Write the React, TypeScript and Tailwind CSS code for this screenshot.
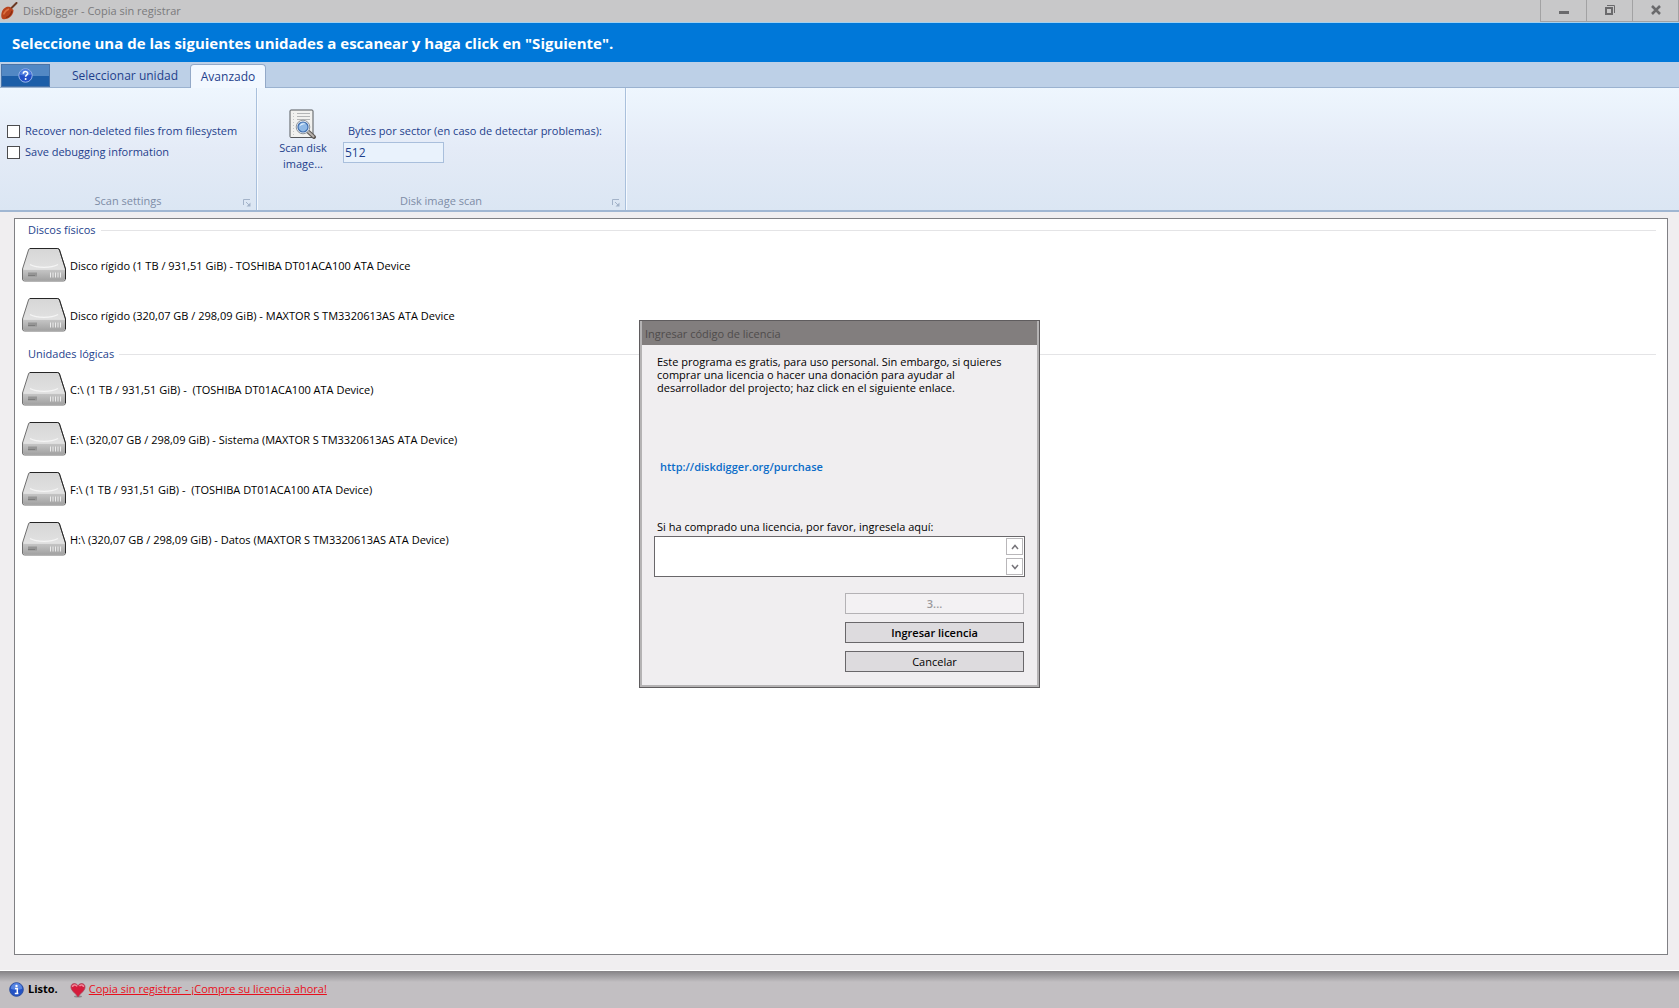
import { useState } from 'react'

const PHYSICAL = [
  'Disco rígido (1 TB / 931,51 GiB) - TOSHIBA DT01ACA100 ATA Device',
  'Disco rígido (320,07 GB / 298,09 GiB) - MAXTOR S TM3320613AS ATA Device',
]

const LOGICAL = [
  'C:\\ (1 TB / 931,51 GiB) -  (TOSHIBA DT01ACA100 ATA Device)',
  'E:\\ (320,07 GB / 298,09 GiB) - Sistema (MAXTOR S TM3320613AS ATA Device)',
  'F:\\ (1 TB / 931,51 GiB) -  (TOSHIBA DT01ACA100 ATA Device)',
  'H:\\ (320,07 GB / 298,09 GiB) - Datos (MAXTOR S TM3320613AS ATA Device)',
]

function ShovelIcon() {
  return (
    <svg width="18" height="18" viewBox="0 0 18 18" aria-hidden="true">
      <path d="M16.500 1 9.500 8" stroke="#6b3a25" strokeWidth="2" strokeLinecap="round" />
      <path d="M3.500 7C6 4.500 8 4.500 10 5l3.500 3c0 3-1.500 5.500-4 7.500-2 1.500-4.500 2-7 1.500C.500 15.500 1 10 3.500 7Z" fill="#b8431d" />
      <path d="M3.500 12.500c1-2.500 3-4.500 5.500-5.500" stroke="#dc7042" strokeWidth="1.500" fill="none" />
      <path d="M6 15.500c3-.5 5-3 6-6.500" stroke="#8a2c12" strokeWidth="1.200" fill="none" />
    </svg>
  )
}

function HelpIcon() {
  return (
    <svg width="15" height="15" viewBox="0 0 15 15" aria-hidden="true">
      <circle cx="7.500" cy="7.500" r="6.700" fill="#2450c8" stroke="#9ab8ea" />
      <path d="M2 6.500a5.500 5.500 0 0 1 11 0c-3 1.500-8 1.500-11 0Z" fill="#4f7de0" />
      <path d="M5.300 5.700c0-3 4.500-2.800 4.400-.2 0 1.500-2 1.500-2.100 3.300" stroke="#fff" strokeWidth="1.600" fill="none" />
      <circle cx="7.600" cy="11" r="1" fill="#fff" />
    </svg>
  )
}

function InfoIcon() {
  return (
    <svg width="15" height="15" viewBox="0 0 15 15" aria-hidden="true">
      <circle cx="7.500" cy="7.500" r="6.800" fill="#2352c4" stroke="#2c4fa0" />
      <path d="M1.800 6.800a5.700 5.700 0 0 1 11.400 0c-3 1.500-8.400 1.500-11.400 0Z" fill="#5785e2" />
      <circle cx="7.500" cy="3.900" r="1.200" fill="#fff" />
      <path d="M6 6.500h2.300v5M5.800 11.500h3.600" stroke="#fff" strokeWidth="1.500" fill="none" />
    </svg>
  )
}

function HeartIcon() {
  return (
    <svg width="16" height="16" viewBox="0 0 16 16" aria-hidden="true">
      <ellipse cx="8" cy="14.500" rx="4" ry="1" fill="#8d8a8c" />
      <path d="M8 15C6 11.500 1 9 1 5 1 .800 6.500.500 8 4 9.500.500 15 .800 15 5c0 4-5 6.500-7 10Z" fill="#d51c3c" stroke="#a8455a" strokeWidth=".8" />
      <path d="M2.500 5c0-2.500 3.500-2.800 4.500-.5M9.500 4.200c1-1.900 4-1.500 4 .8" stroke="#f18a9b" strokeWidth="1.500" fill="none" />
    </svg>
  )
}

function ScanIcon() {
  return (
    <svg width="28" height="30" viewBox="0 0 28 30" aria-hidden="true">
      <rect x="1" y="1" width="23" height="27.500" rx="1" fill="#f1f1ef" stroke="#55585c" />
      <path d="M8 4.500h13M8 7.500h13M8 10.500h13" stroke="#b3b5b6" />
      <path d="M4.500 4v22" stroke="#c4c6c8" strokeDasharray="1 2" />
      <path d="m18.500 22 6.500 6" stroke="#5f5a57" strokeWidth="4" strokeLinecap="round" />
      <path d="m18.500 22 6 5.500" stroke="#b9b3ae" strokeWidth="1.800" strokeLinecap="round" />
      <circle cx="14" cy="18" r="6.800" fill="#e9edf2" stroke="#8f959b" />
      <circle cx="14" cy="18" r="5" fill="#8fb9e6" stroke="#3f6eae" strokeWidth="1.200" />
      <path d="M10.500 17.500c.5-3 4-4 6-2.500-2 0-4.500 1-6 2.500Z" fill="#e0effc" />
    </svg>
  )
}

function DriveIcon() {
  return (
    <svg className="shrink-0" width="46" height="36" viewBox="0 1 46 36" aria-hidden="true">
      <defs>
        <linearGradient id="drive-top" x1="0" y1="0" x2="0" y2="1">
          <stop offset="0" stopColor="#d6d6d6" />
          <stop offset="1" stopColor="#e8e8e8" />
        </linearGradient>
        <linearGradient id="drive-front" x1="0" y1="0" x2="0" y2="1">
          <stop offset="0" stopColor="#c6c6c6" />
          <stop offset="1" stopColor="#a2a2a2" />
        </linearGradient>
      </defs>
      <path d="M9 1.500h27.500q1.500 0 2 1.500L44.500 22v10q0 2-2 2h-39q-2 0-2-2V22L7.500 3Q8 1.500 9 1.500Z" fill="url(#drive-top)" stroke="#6f6f6f" />
      <path d="M2 22.500h42V32q0 1.500-1.500 1.500h-39Q2 33.500 2 32Z" fill="url(#drive-front)" />
      <path d="M9 1.500h27.500q1.500 0 2 1.500L44.500 22v10" stroke="#262626" fill="none" />
      <path d="M3 22.500h40" stroke="#dedede" />
      <path d="M9 17.500c7 3.800 21 3.800 28 0" stroke="#f5f5f5" strokeWidth="1.300" fill="none" />
      <rect x="7" y="25.500" width="9" height="4" fill="#959595" />
      <path d="M7 28.500h7" stroke="#7c7c7c" />
      <path d="M29.500 25.500v5M32 25.500v5M34.500 25.500v5M37 25.500v5M39.500 25.500v5" stroke="#ececec" />
    </svg>
  )
}

function LauncherIcon() {
  return (
    <svg width="8" height="8" viewBox="0 0 8 8" aria-hidden="true">
      <path d="M.5 6V.5H7M3 3l3 3" stroke="#a3b3c9" fill="none" />
      <path d="M7.500 3.500v4h-4Z" fill="#a3b3c9" />
    </svg>
  )
}

function WindowButton({ label, children }: { label: string; children: React.ReactNode }) {
  return (
    <button
      aria-label={label}
      className="flex w-[46px] items-center justify-center border-b border-l border-[#a2a2a3] pb-px text-[#6a6a6c]"
    >
      {children}
    </button>
  )
}

function RibbonGroup({ title, className, children }: { title: string; className: string; children: React.ReactNode }) {
  return (
    <section className={`flex flex-col border-r border-[#a9c0dc] shadow-[1px_0_0_#f6faff] ${className}`}>
      <div className="flex-1">{children}</div>
      <div className="flex h-[19px] items-center pr-[5px] pl-[13px]">
        <h2 className="flex-1 text-center leading-[14px] text-[#7d8ca6]">{title}</h2>
        <button aria-label={`${title}...`} className="mt-1">
          <LauncherIcon />
        </button>
      </div>
    </section>
  )
}

function Option({ label }: { label: string }) {
  const [checked, setChecked] = useState(false)
  return (
    <label className="flex h-[21px] items-center gap-[5px] whitespace-nowrap">
      <input
        type="checkbox"
        checked={checked}
        onChange={(e) => setChecked(e.target.checked)}
        className="size-[13px] shrink-0 appearance-none border border-[#4c4c4e] bg-white checked:bg-[#0078d7]"
      />
      {label}
    </label>
  )
}

function DriveGroup({ title, drives }: { title: string; drives: string[] }) {
  return (
    <section>
      <div className="flex h-[22px] items-center gap-[5px] pr-[11px] pl-[13px]">
        <h2 className="text-[#1e3f8c]">{title}</h2>
        <div className="h-px flex-1 bg-[#e4e4e6]" />
      </div>
      <ul>
        {drives.map((drive) => (
          <li key={drive} className="flex h-[50px] items-center gap-[3px] pl-[6px] whitespace-pre text-black">
            <DriveIcon />
            {drive}
          </li>
        ))}
      </ul>
    </section>
  )
}

function LicenseDialog() {
  const [code, setCode] = useState('')
  return (
    <div className="fixed inset-0 flex items-center justify-center">
      <div
        role="dialog"
        aria-labelledby="license-title"
        className="w-[401px] border border-[#5f5c5e] bg-[#b5b3b4] px-[2px] pb-[2px] leading-[13px] text-black"
      >
        <h2 id="license-title" className="flex h-6 items-center bg-[#827e7e] pl-[3px] text-[#4f4c4c]">
          Ingresar código de licencia
        </h2>
        <div className="flex flex-col bg-[#f0eef0] px-3 pt-[10px] pb-[13px]">
          <p className="h-[105px] pr-[20px] pl-[3px]">
            Este programa es gratis, para uso personal. Sin embargo, si quieres
            <br />
            comprar una licencia o hacer una donación para ayudar al
            <br />
            desarrollador del projecto; haz click en el siguiente enlace.
          </p>
          <a href="http://diskdigger.org/purchase" className="self-start pl-[6px] font-semibold text-[#0a6cc8]">
            http://diskdigger.org/purchase
          </a>
          <label htmlFor="license-code" className="mt-[47px] pl-[3px]">
            Si ha comprado una licencia, por favor, ingresela aquí:
          </label>
          <div className="mt-[3px] flex h-[41px] border border-[#69676a] bg-white p-px">
            <textarea
              id="license-code"
              value={code}
              onChange={(e) => setCode(e.target.value)}
              className="min-w-0 flex-1 resize-none px-1 outline-none"
            />
            <div className="flex w-[17px] flex-col justify-between">
              <button aria-label="Subir" className="flex h-[17px] items-center justify-center border border-[#b9b7ba]">
                <svg width="8" height="6" viewBox="0 0 8 6" aria-hidden="true">
                  <path d="m1 5 3-3.500L7 5" stroke="#77757a" strokeWidth="1.500" fill="none" />
                </svg>
              </button>
              <button aria-label="Bajar" className="flex h-[17px] items-center justify-center border border-[#b9b7ba]">
                <svg width="8" height="6" viewBox="0 0 8 6" aria-hidden="true">
                  <path d="m1 1 3 3.500L7 1" stroke="#77757a" strokeWidth="1.500" fill="none" />
                </svg>
              </button>
            </div>
          </div>
          <div className="mt-4 flex w-[180px] flex-col gap-2 self-end pr-px">
            <button disabled className="h-[21px] border border-[#b4b2b5] bg-[#f3f1f3] font-semibold text-[#9b999c]">
              3...
            </button>
            <button className="h-[21px] border border-[#69676a] bg-[#dddbde] font-semibold">Ingresar licencia</button>
            <button className="h-[21px] border border-[#69676a] bg-[#dddbde]">Cancelar</button>
          </div>
        </div>
      </div>
    </div>
  )
}

export default function App() {
  const [bytes, setBytes] = useState('512')
  return (
    <div className="flex h-screen flex-col bg-[#f0eef0] font-['Open_Sans','Noto_Sans',sans-serif] text-[11px]">
      <header className="flex h-[23px] justify-between border-b border-[#a3d0ee] bg-[#c8c8c9]">
        <div className="flex items-center gap-[5px] text-[#7a7a7c]">
          <ShovelIcon />
          <h1 className="pt-px">DiskDigger - Copia sin registrar</h1>
        </div>
        <div className="flex border-r border-[#a2a2a3]">
          <WindowButton label="Minimizar">
            <svg width="10" height="10" viewBox="0 0 10 10">
              <path d="M0 7.500h10" stroke="currentColor" strokeWidth="3" />
            </svg>
          </WindowButton>
          <WindowButton label="Restaurar">
            <svg width="10" height="10" viewBox="0 0 10 10">
              <path d="M2 .5h7.500V8" stroke="currentColor" fill="none" />
              <rect x="1" y="3" width="6" height="6" stroke="currentColor" strokeWidth="2" fill="none" />
            </svg>
          </WindowButton>
          <WindowButton label="Cerrar">
            <svg width="10" height="10" viewBox="0 0 10 10">
              <path d="m1 1 8 8M9 1 1 9" stroke="currentColor" strokeWidth="2.500" />
            </svg>
          </WindowButton>
        </div>
      </header>

      <p className="flex h-[39px] items-center bg-[#0078d9] pt-[2px] pl-3 text-[15px] font-bold text-white">
        Seleccione una de las siguientes unidades a escanear y haga click en "Siguiente".
      </p>

      <nav className="flex h-[26px] items-end border-b border-[#9ab2d0] bg-[#bdd0e7] pl-px text-[12px] text-[#1e3f8c]">
        <button
          aria-label="Ayuda"
          className="flex h-[23px] w-[49px] items-center justify-center border border-[#4a74a8] bg-linear-to-b from-[#5288c4] from-50% to-[#1c5ea8] to-50%"
        >
          <HelpIcon />
        </button>
        <button className="h-[23px] w-[140px] pt-px pl-[10px]">Seleccionar unidad</button>
        <button className="-mb-px h-6 w-[76px] rounded-t border border-b-0 border-[#93a9c8] bg-[#f2f8ff]">Avanzado</button>
      </nav>

      <div className="flex h-[124px] border-b-2 border-[#a0b6d2] bg-linear-to-b from-[#eef6fe] via-[#e4ebf7] to-[#dbe6f3] text-[#1e3f8c]">
        <RibbonGroup title="Scan settings" className="w-[257px]">
          <div className="pt-[33px] pl-[7px]">
            <Option label="Recover non-deleted files from filesystem" />
            <Option label="Save debugging information" />
          </div>
        </RibbonGroup>
        <RibbonGroup title="Disk image scan" className="w-[369px]">
          <div className="flex gap-[11px] pt-[21px] pl-[17px]">
            <button className="flex w-[58px] flex-col items-center gap-px leading-4">
              <ScanIcon />
              Scan disk image...
            </button>
            <div className="flex flex-col gap-[3px] pt-[14px]">
              <label htmlFor="sector-bytes" className="pl-[5px] leading-4">
                Bytes por sector (en caso de detectar problemas):
              </label>
              <input
                id="sector-bytes"
                value={bytes}
                onChange={(e) => setBytes(e.target.value)}
                className="h-[21px] w-[101px] border border-[#a9bfdc] bg-[#e9f2fc] px-px text-[12px] outline-none"
              />
            </div>
          </div>
        </RibbonGroup>
      </div>

      <main className="mt-[6px] mr-[11px] mb-[15px] ml-[14px] flex flex-1 flex-col gap-[2px] border border-[#808084] bg-white">
        <DriveGroup title="Discos físicos" drives={PHYSICAL} />
        <DriveGroup title="Unidades lógicas" drives={LOGICAL} />
      </main>

      <footer className="flex h-[38px] items-center border-t border-white bg-linear-to-b from-[#858386] via-[#c2bfc2] via-30% to-[#c2bfc2] pl-[9px]">
        <InfoIcon />
        <span className="ml-1 font-bold">Listo.</span>
        <span className="mr-[3px] ml-3">
          <HeartIcon />
        </span>
        <a href="#comprar" className="text-[#e8101c] underline">
          Copia sin registrar - ¡Compre su licencia ahora!
        </a>
      </footer>

      <LicenseDialog />
    </div>
  )
}
